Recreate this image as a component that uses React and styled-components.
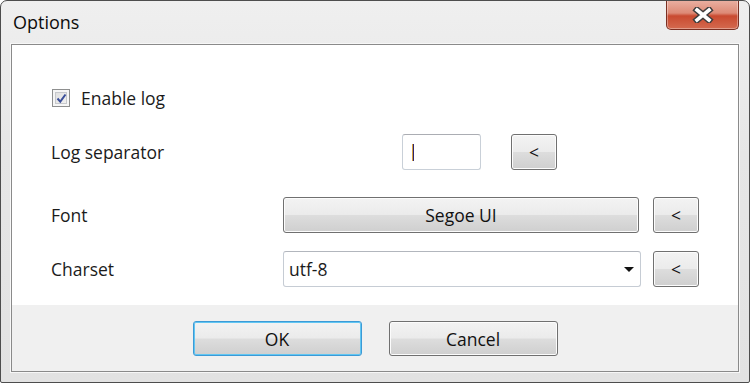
import React from 'react';
import styled, { createGlobalStyle } from 'styled-components';

const GlobalStyle = createGlobalStyle`
    html, body {
        margin: 0;
        padding: 0;
        background: #ffffff;
    }
    body {
        font-family: "Open Sans", "Noto Sans", sans-serif;
        color: #1b1b1b;
    }
`;

const Window = styled.div`
    box-sizing: border-box;
    width: 750px;
    height: 383px;
    border: 1px solid #4d4d4d;
    border-radius: 7px 7px 2px 2px;
    background: linear-gradient(180deg, #efefef 0%, #e6e6e6 40%, #e2e2e2 100%);
    display: flex;
    flex-direction: column;
    overflow: hidden;
`;

const TitleBar = styled.div`
    height: 43px;
    display: flex;
    align-items: flex-start;
    justify-content: space-between;
    padding-left: 12px;
`;

const Title = styled.span`
    margin-top: 9px;
    font-size: 18px;
    color: #0c0c0c;
`;

const CloseButton = styled.div`
    width: 73px;
    height: 30px;
    margin-right: 10px;
    margin-top: -1px;
    box-sizing: border-box;
    border: 1px solid #7a2f22;
    border-top: none;
    border-radius: 0 0 5px 5px;
    background: linear-gradient(180deg, #eab1a3 0%, #dd8a76 45%, #c94a30 55%, #d46a4f 100%);
    box-shadow: inset 0 0 0 1px rgba(255, 255, 255, 0.35);
    display: flex;
    align-items: center;
    justify-content: center;
`;

const Client = styled.div`
    flex: 1;
    margin: 0 10px 10px 10px;
    border: 1px solid #8a8a8a;
    box-shadow: 0 0 0 1px #f7f7f7;
    display: flex;
    flex-direction: column;
`;

const Content = styled.div`
    height: 260px;
    background: #ffffff;
    display: flex;
    flex-direction: column;
    padding: 35px 0 0 39px;
    box-sizing: border-box;
`;

const Row = styled.div`
    display: flex;
    align-items: center;
    height: 36px;
    margin-top: ${(p) => p.$gap || 0}px;
`;

const Label = styled.span`
    width: 232px;
    font-size: 17.5px;
`;

const CheckLabel = styled.label`
    display: flex;
    align-items: center;
    gap: 11px;
    font-size: 17.5px;
    padding-left: 1px;
`;

const CheckBox = styled.span`
    width: 18px;
    height: 18px;
    box-sizing: border-box;
    border: 1px solid #8e8f8f;
    background: linear-gradient(135deg, #dcdcdc 0%, #f4f4f4 100%);
    box-shadow: inset 0 0 0 2px #f6f6f6, inset 0 0 0 3px #c6c8cc;
    display: flex;
    align-items: center;
    justify-content: center;
`;

const SepControls = styled.div`
    display: flex;
    align-items: center;
    gap: 30px;
    padding-left: 119px;
`;

const TextBox = styled.div`
    width: 79px;
    height: 36px;
    box-sizing: border-box;
    border: 1px solid #c9d0d8;
    border-top-color: #abadb3;
    border-radius: 3px;
    background: #fff;
    display: flex;
    align-items: center;
    padding-left: 9px;
`;

const Caret = styled.span`
    width: 2px;
    height: 17px;
    background: linear-gradient(90deg, #d8a040 0 1px, #2e2570 1px 2px);
`;

const Button = styled.button`
    box-sizing: border-box;
    width: ${(p) => p.$w}px;
    height: ${(p) => p.$h || 36}px;
    margin-left: ${(p) => p.$ml || 0}px;
    padding: 0;
    border: 1px solid ${(p) => (p.$focus ? '#3c9ad6' : '#707070')};
    border-radius: 3px;
    background: linear-gradient(180deg, #f3f3f3 0%, #ebebeb 49%, #dddddd 51%, #cfcfcf 100%);
    box-shadow: inset 0 0 0 1px ${(p) => (p.$focus ? '#61c6f2' : '#fcfcfc')};
    font-family: "Open Sans", "Noto Sans", sans-serif;
    font-size: 17.5px;
    color: #111;
    display: flex;
    align-items: center;
    justify-content: center;
`;

const Select = styled.div`
    box-sizing: border-box;
    width: 358px;
    height: 36px;
    border: 1px solid #c6ccd4;
    border-top-color: #b2b6bd;
    border-radius: 3px;
    background: #fff;
    display: flex;
    align-items: center;
    justify-content: space-between;
    padding: 0 6px 0 5px;
    font-size: 17.5px;
`;

const Arrow = styled.span`
    width: 0;
    height: 0;
    border-left: 5px solid transparent;
    border-right: 5px solid transparent;
    border-top: 5px solid #111;
`;

const Footer = styled.div`
    flex: 1;
    background: #f0f0f0;
    display: flex;
    align-items: center;
    justify-content: center;
    gap: 27px;
    padding-top: 1px;
`;

const CloseGlyph = () => (
    <svg width="22" height="16" viewBox="0 0 22 16">
        <path d="M5 3 L17 13 M17 3 L5 13" stroke="#3d3d3d" strokeWidth="6.5" strokeLinecap="square" />
        <path d="M5 3 L17 13 M17 3 L5 13" stroke="#ffffff" strokeWidth="3.6" strokeLinecap="square" />
    </svg>
);

const CheckMark = () => (
    <svg width="11" height="11" viewBox="0 0 11 11">
        <path d="M1.5 5.5 L4.3 8.6 L9.5 1.5" fill="none" stroke="#3b4f9a" strokeWidth="2" />
    </svg>
);

const App = () => {
    return (
        <>
            <GlobalStyle />
            <Window>
                <TitleBar>
                    <Title>Options</Title>
                    <CloseButton>
                        <CloseGlyph />
                    </CloseButton>
                </TitleBar>
                <Client>
                    <Content>
                        <Row>
                            <CheckLabel>
                                <CheckBox>
                                    <CheckMark />
                                </CheckBox>
                                Enable log
                            </CheckLabel>
                        </Row>
                        <Row $gap={18}>
                            <Label>Log separator</Label>
                            <SepControls>
                                <TextBox>
                                    <Caret />
                                </TextBox>
                                <Button $w={46}>&lt;</Button>
                            </SepControls>
                        </Row>
                        <Row $gap={27}>
                            <Label>Font</Label>
                            <Button $w={356}>Segoe UI</Button>
                            <Button $w={46} $ml={14}>&lt;</Button>
                        </Row>
                        <Row $gap={18}>
                            <Label>Charset</Label>
                            <Select>
                                utf-8
                                <Arrow />
                            </Select>
                            <Button $w={46} $ml={12}>&lt;</Button>
                        </Row>
                    </Content>
                    <Footer>
                        <Button $w={169} $h={35} $focus>OK</Button>
                        <Button $w={169} $h={35}>Cancel</Button>
                    </Footer>
                </Client>
            </Window>
        </>
    );
};

export default App;
